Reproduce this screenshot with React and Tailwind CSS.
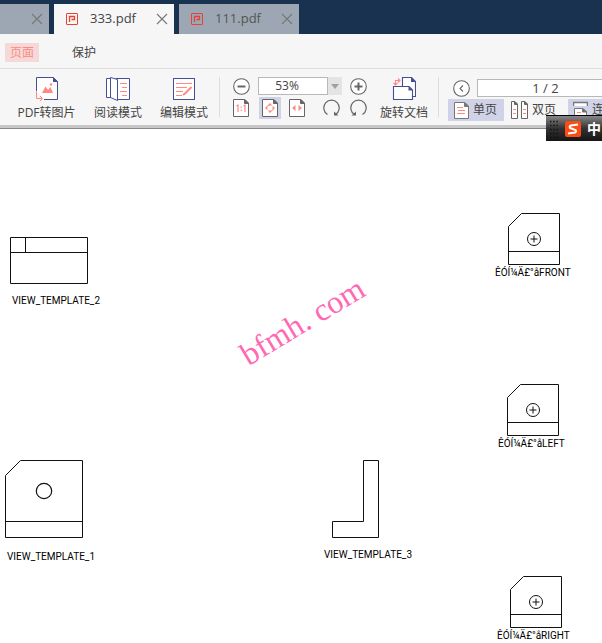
import React from 'react';
import clsx from 'clsx';

const tabs = [
    { id: 'first', title: '', width: 'w-[49px]' },
    { id: 'second', title: '333.pdf', width: 'w-[120px]', active: true },
    { id: 'third', title: '111.pdf', width: 'w-[120px]' },
];

const CloseIcon = () => (
    <svg width="12" height="12" viewBox="0 0 12 12" fill="none" stroke="#777777" strokeWidth="1.1">
        <path d="M1 1L11 11M11 1L1 11" />
    </svg>
);

const PdfBadge = () => (
    <svg width="12" height="12" viewBox="0 0 12 12" fill="none" stroke="#e94235">
        <rect x="0.5" y="0.5" width="11" height="11" rx="0.5" />
        <path d="M3.5 9V3.5H8.5V6.5H5.5" strokeWidth="1.3" />
    </svg>
);

const ConvertIcon = () => (
    <svg width="24" height="24" viewBox="0 0 24 24" fill="none" stroke="#464f94">
        <path d="M1.5 14V0.5H18.5L22.5 4.5V22.5H9" fill="#ffffff" />
        <path d="M18 0V5H23Z" fill="#464f94" stroke="none" />
        <path d="M7 16L10.5 9.5L13 13L15.5 10L18 16Z" fill="#ff8983" stroke="none" />
        <circle cx="16" cy="7.5" r="1.2" fill="#ff8983" stroke="none" />
        <path d="M1.5 14.5V21.5H7M5 19L7.5 21.5L5 24" stroke="#ff8983" />
    </svg>
);

const ReadIcon = () => (
    <svg width="24" height="24" viewBox="0 0 24 24" fill="#ffffff" stroke="#464f94">
        <path d="M10 1.5H23.5V22.5H10ZM0.5 1.5H5V20.5H0.5Z" />
        <path d="M4.5 0.5L11.5 2.5V23.5L4.5 20.5Z" />
        <path d="M14 6.5H21M16 10.5H21M14 14.5H21M16 18.5H21" stroke="#ff8983" />
    </svg>
);

const EditIcon = () => (
    <svg width="24" height="24" viewBox="0 0 24 24" fill="none" stroke="#464f94">
        <rect x="1.5" y="1.5" width="21" height="21" fill="#ffffff" />
        <path d="M4 6.5H20M4 10.5H15M4 14.5H11M4 18.5H10" stroke="#ff8983" />
        <path d="M19.5 10L13 16.5L11 18" stroke="#ff8983" strokeWidth="2" />
    </svg>
);

const RotateDocIcon = () => (
    <svg width="24" height="24" viewBox="0 0 24 24" stroke="#464f94" strokeWidth="1.1" fill="#ffffff">
        <path d="M10.5 9V0.5H19.5L23.5 4.5V19.5H20" />
        <path d="M19 0V5H24Z" fill="#464f94" stroke="none" />
        <path d="M1.5 9.5H17L20.5 13V22.5H1.5Z" />
        <path d="M16.5 9V13.5H21Z" fill="#464f94" stroke="none" />
        <path d="M3.5 8V3.5H8M1.5 6L3.5 8L5.5 6M6 1.5L8 3.5L6 5.5" stroke="#ff8983" fill="none" />
    </svg>
);

const CircleIcon = ({ kind }) => (
    <svg width="17" height="17" viewBox="0 0 17 17" fill="#ffffff" stroke="#666666" strokeWidth="1.1">
        <circle cx="8.5" cy="8.5" r="7.8" />
        {kind === 'prev' ? (
            <path d="M10 5.5L7 8.5L10 11.5" fill="none" />
        ) : (
            <path d={kind === 'plus' ? 'M4.5 8.5H12.5M8.5 4.5V12.5' : 'M4.5 8.5H12.5'} strokeWidth="2" />
        )}
    </svg>
);

const FitIcon = ({ kind }) => (
    <svg width="16" height="18" viewBox="0 0 16 18" fill="#ffffff" stroke="#666666">
        <path d="M0.5 0.5H12L15.5 4V17.5H0.5Z" />
        <path d="M11.5 0.5V4.5H15.5Z" fill="#666666" />
        {kind === 'actual' && (
            <path d="M3.5 7L5 6V13M10.5 7L12 6V13M8.2 7.5V8.8M8.2 10.8V12" fill="none" stroke="#ff8983" strokeWidth="1.2" />
        )}
        {kind === 'page' && (
            <g fill="#ff8983" stroke="none">
                <path d="M8 4L11.5 7.5H4.5ZM8 14L11.5 10.5H4.5ZM3 9L6.5 5.5V12.5ZM13 9L9.5 5.5V12.5Z" />
                <circle cx="8" cy="9" r="2.6" fill="#ffffff" />
            </g>
        )}
        {kind === 'width' && <path d="M3 9L6.5 6V12ZM13 9L9.5 6V12Z" fill="#ff8983" stroke="none" />}
    </svg>
);

const RotateIcon = ({ flip }) => (
    <svg width="17" height="18" viewBox="0 0 17 18" fill="none" stroke="#666666" strokeWidth="1.2">
        {flip ? (
            <>
                <path d="M12.5 15.5A7.7 7.7 0 1 0 4.5 15.5" />
                <path d="M1.5 16.5H6V12.5Z" fill="#666666" stroke="none" />
            </>
        ) : (
            <>
                <path d="M4.5 15.5A7.7 7.7 0 1 1 12.5 15.5" />
                <path d="M15.5 16.5H11V12.5Z" fill="#666666" stroke="none" />
            </>
        )}
    </svg>
);

const SinglePageIcon = () => (
    <svg width="15" height="17" viewBox="0 0 15 17" fill="#ffffff" stroke="#777777">
        <path d="M0.5 0.5H11L14.5 4V16.5H0.5Z" />
        <path d="M10.5 0.5V4.5H14.5Z" fill="#777777" />
        <path d="M3 5.5H9M4 8.5H11M3 11.5H11" stroke="#ff8983" />
    </svg>
);

const DoublePageIcon = () => (
    <svg width="17" height="18" viewBox="0 0 17 18" fill="#ffffff" stroke="#666666">
        <path d="M0.5 0.5H4L6.5 3V17.5H0.5ZM10.5 0.5H14L16.5 3V17.5H10.5Z" />
        <path d="M3.5 0.5V3.5H6.5ZM13.5 0.5V3.5H16.5Z" fill="#666666" />
        <path d="M2 8.5H5M2 12.5H5M12 8.5H15M12 12.5H15" stroke="#ff8983" />
    </svg>
);

const ContinuousIcon = () => (
    <svg width="15" height="18" viewBox="0 0 15 18" fill="#ffffff" stroke="#777777">
        <path d="M0.5 5V1.5H14.5V5" strokeWidth="1.5" />
        <path d="M1.5 18V7.5H10L13.5 10.5V18" />
        <path d="M9.5 7.5V11H13.5Z" fill="#666666" />
        <path d="M4 11.5H8M4 14.5H11" stroke="#ff8983" />
    </svg>
);

const ToolButton = ({ icon, label, className }) => (
    <button className={clsx('flex shrink-0 flex-col items-center gap-1 whitespace-nowrap', className)}>
        {icon}
        <span className="leading-4">{label}</span>
    </button>
);

const Divider = () => <div className="h-10 w-px shrink-0 bg-[#dddddd]" />;

const Toolbar = () => (
    <div className="flex h-14 items-start overflow-hidden pt-2 text-xs text-[#444444]">
        <div className="flex shrink-0 gap-[18px] pl-[17px] pr-[11px]">
            <ToolButton icon={<ConvertIcon />} label="PDF转图片" className="w-[59px]" />
            <ToolButton icon={<ReadIcon />} label="阅读模式" className="w-12" />
            <ToolButton icon={<EditIcon />} label="编辑模式" className="w-12" />
        </div>
        <Divider />
        <div className="flex shrink-0 flex-col gap-0.5 pl-[13px]">
            <div className="flex items-center gap-2">
                <button aria-label="Zoom out"><CircleIcon kind="minus" /></button>
                <div className="flex h-[18px] w-[84px]">
                    <input aria-label="Zoom" defaultValue="53%" className="w-[70px] border border-[#b8b8b8] bg-white pr-3 text-center text-xs" />
                    <button aria-label="Zoom levels" className="flex flex-1 items-center justify-center bg-[#e4e4e4]">
                        <svg width="8" height="5" viewBox="0 0 8 5" fill="#a0a0a0"><path d="M0 0H8L4 5Z" /></svg>
                    </button>
                </div>
                <button aria-label="Zoom in"><CircleIcon kind="plus" /></button>
            </div>
            <div className="flex items-center">
                <button aria-label="Actual size" className="mr-2.5"><FitIcon kind="actual" /></button>
                <button aria-label="Fit page" className="mr-2 flex h-[22px] w-[22px] items-center justify-center bg-[#d0d2e8]"><FitIcon kind="page" /></button>
                <button aria-label="Fit width" className="mr-[18px]"><FitIcon kind="width" /></button>
                <button aria-label="Rotate right" className="mr-2.5"><RotateIcon /></button>
                <button aria-label="Rotate left"><RotateIcon flip /></button>
            </div>
        </div>
        <ToolButton icon={<RotateDocIcon />} label="旋转文档" className="ml-[13px] mr-[10px] w-12" />
        <Divider />
        <div className="flex min-w-0 flex-1 flex-col gap-0.5 pl-[9px] pt-0.5">
            <div className="flex items-center gap-[7px] pl-[5px]">
                <button aria-label="Previous page"><CircleIcon kind="prev" /></button>
                <input aria-label="Page" defaultValue="1 / 2" className="h-[18px] w-[137px] shrink-0 border border-[#b8b8b8] bg-white text-center text-[13px]" />
            </div>
            <div className="flex shrink-0">
                <button className="flex h-[22px] w-14 shrink-0 items-center gap-1 bg-[#d0d2e8] pl-1.5"><SinglePageIcon />单页</button>
                <button className="flex h-[22px] w-16 shrink-0 items-center gap-1 pl-[7px]"><DoublePageIcon />双页</button>
                <button className="flex h-[22px] w-14 shrink-0 items-center gap-1 bg-[#d0d2e8] pl-[5px]"><ContinuousIcon />连续</button>
            </div>
        </div>
    </div>
);

const ImeBar = () => (
    <div className="absolute right-0 top-[115px] flex h-[26px] w-14 items-center overflow-hidden border-t border-black bg-gradient-to-b from-[#888888] via-[#333333] via-50% to-[#151515]">
        <svg width="19" height="24" viewBox="0 0 19 24" className="shrink-0" stroke="#111111" strokeWidth="1.4" strokeDasharray="1.4 1.8">
            <path d="M4 4.5H12M4 8.5H12M4 12.5H12M4 16.5H12M4 20.5H12" />
        </svg>
        <svg width="16" height="16" viewBox="0 0 16 16" className="shrink-0">
            <rect width="16" height="16" rx="2" fill="#fa4c14" />
            <path d="M13 3.5L6 4.5Q4 5 5 7L10.5 9Q12 10.5 10 11.5L3 12.5" fill="none" stroke="#ffffff" strokeWidth="2" />
        </svg>
        <span className="ml-1.5 whitespace-nowrap text-sm font-bold text-white">中</span>
    </div>
);

const FaceShape = () => (
    <svg width="53" height="53" viewBox="0 0 53 53" fill="none" stroke="#111111">
        <path d="M0.5 13.5L13.5 0.5H51.5V51.5H0.5ZM0.5 38.5H51.5" />
        <circle cx="26" cy="26" r="6.5" />
        <path d="M22.5 26H29.5M26 22.5V29.5" />
    </svg>
);

const TopShape = () => (
    <svg width="79" height="48" viewBox="0 0 79 48" fill="none" stroke="#111111">
        <path d="M0.5 0.5H77.5V46.5H0.5ZM0.5 15.5H77.5M15.5 0.5V15.5" />
    </svg>
);

const PlateShape = () => (
    <svg width="79" height="79" viewBox="0 0 79 79" fill="none" stroke="#111111">
        <path d="M0.5 15.5L15.5 0.5H77.5V77.5H0.5ZM0.5 61.5H77.5" />
        <circle cx="39" cy="31" r="7.7" strokeWidth="1.2" />
    </svg>
);

const AngleShape = () => (
    <svg width="48" height="79" viewBox="0 0 48 79" fill="none" stroke="#111111">
        <path d="M31.5 0.5H46.5V77.5H0.5V61.5H31.5Z" />
    </svg>
);

// Views placed freely on the drawing sheet
const views = [
    { label: 'VIEW_TEMPLATE_2', shape: <TopShape />, place: 'left-[10px] top-[108px]', caption: 'pl-0.5 pt-2.5' },
    { label: 'VIEW_TEMPLATE_1', shape: <PlateShape />, place: 'left-[5px] top-[331px]', caption: 'pl-0.5 pt-3' },
    { label: 'VIEW_TEMPLATE_3', shape: <AngleShape />, place: 'left-[324px] top-[331px]', caption: 'pt-2.5', indent: 'pl-2' },
    { label: 'ÊÓÍ¼Ä£°åFRONT', shape: <FaceShape />, place: 'left-[495px] top-[84px]', caption: 'pt-px', indent: 'pl-[13px]' },
    { label: 'ÊÓÍ¼Ä£°åLEFT', shape: <FaceShape />, place: 'left-[498px] top-[255px]', caption: 'pt-px', indent: 'pl-[9px]' },
    { label: 'ÊÓÍ¼Ä£°åRIGHT', shape: <FaceShape />, place: 'left-[497px] top-[447px]', caption: 'pt-px', indent: 'pl-[13px]' },
];

const Sheet = () => (
    <main className="relative flex-1 overflow-hidden bg-white">
        {views.map((view) => (
            <figure key={view.label} className={clsx('absolute', view.place)}>
                <div className={clsx('[&>svg]:block', view.indent)}>{view.shape}</div>
                <figcaption className={clsx("whitespace-nowrap font-['Roboto',sans-serif] text-[10px] leading-3 text-black", view.caption)}>
                    {view.label}
                </figcaption>
            </figure>
        ))}
        <p className="absolute left-[233px] top-[176px] -rotate-31 whitespace-nowrap font-['Liberation_Serif',serif] text-[32px] leading-8 text-[#ff69b4]">
            bfmh<span className="pr-2">.</span>com
        </p>
    </main>
);

const App = () => {
    return (
        <div className="relative flex min-h-screen flex-col overflow-hidden bg-[#f6f6f6] font-['Open_Sans','Noto_Sans_CJK_SC',sans-serif]">
            <header className="flex gap-[5px] bg-[#18324f] pt-1">
                {tabs.map((tab) => (
                    <div
                        key={tab.id}
                        className={clsx(
                            'flex h-[30px] items-center pr-1.5',
                            tab.width,
                            tab.active ? 'bg-[#f6f6f6] text-[#444444]' : 'bg-[#9da7b4] text-[#555555]'
                        )}
                    >
                        {tab.title && (
                            <a href="#" className="flex items-center gap-3 pl-3 text-[13px]">
                                <PdfBadge />
                                {tab.title}
                            </a>
                        )}
                        <button aria-label="Close tab" className="ml-auto"><CloseIcon /></button>
                    </div>
                ))}
            </header>
            <nav className="flex h-[35px] items-center gap-7 border-b border-[#dddddd] pl-[5px] pt-0.5 text-xs text-[#444444]">
                <a href="#" className="bg-[#f5d9d9] px-[5px] leading-[19px] text-[#ff8983]">页面</a>
                <a href="#" className="px-[5px] leading-[19px]">保护</a>
            </nav>
            <Toolbar />
            <div className="h-1 border-b border-[#888888] bg-[#c8c8c8]" />
            <Sheet />
            <ImeBar />
        </div>
    );
};

export default App;
